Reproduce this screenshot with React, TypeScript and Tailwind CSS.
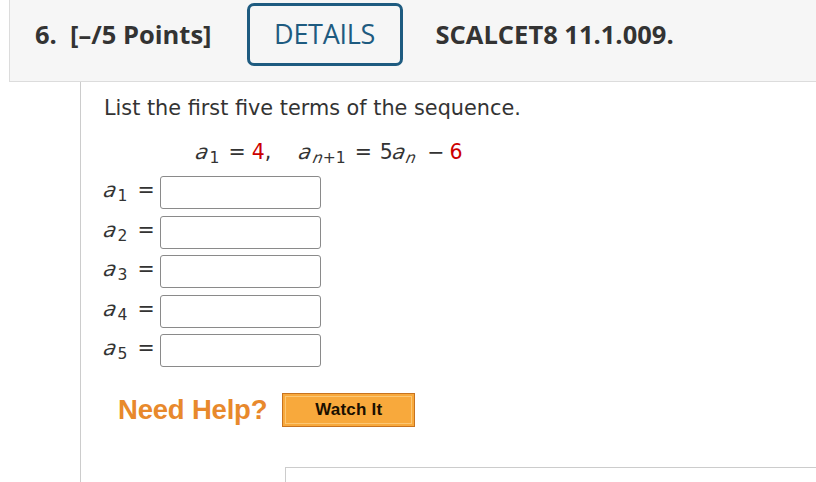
import React from "react";

const verdana = { fontFamily: '"DejaVu Sans", Verdana, sans-serif' };

function It({ children }: { children: React.ReactNode }) {
  return <span className="inline-block italic -skew-x-[12deg]">{children}</span>;
}

function Sub({ base, sub }: { base: string; sub: React.ReactNode }) {
  return (
    <span className="inline-flex items-baseline">
      <It>{base}</It>
      <span className="text-[0.76em] relative top-[0.28em] ml-[1px]">{sub}</span>
    </span>
  );
}

export default function App() {
  const rows = ["1", "2", "3", "4", "5"];
  return (
    <div className="w-[816px] h-[482px] overflow-hidden bg-white relative">
      <div className="ml-[9px] h-[82px] bg-[#f6f6f6] border-l border-b border-[#dcdcdc] flex items-start font-['Open_Sans',sans-serif] text-[#333]">
        <div className="pl-[25px] pt-[15px] text-[25.5px] font-bold whitespace-pre">6.  [–/5 Points]</div>
        <div className="ml-[35px] mt-[3px] w-[156px] h-[63px] border-[3px] border-[#1e5b80] rounded-[7px] flex items-center justify-center text-[27px] text-[#1e5b80] tracking-[-0.3px]">
          DETAILS
        </div>
        <div className="ml-[33px] pt-[15px] text-[25.5px] font-bold">SCALCET8 11.1.009.</div>
      </div>
      <div className="ml-[80px] border-l border-[#cccccc] h-[400px] text-[#333]" style={verdana}>
        <div className="pl-[23px] pt-[12px] text-[20.8px] leading-[28px]">List the first five terms of the sequence.</div>
        <div className="pl-[115px] pt-[16px] text-[20.5px] leading-[28px] flex items-baseline whitespace-pre">
          <Sub base="a" sub="1" />
          <span className="ml-[9px]">=</span>
          <span className="ml-[6px] text-[#cc0000]">4</span>
          <span>,</span>
          <span className="ml-[28px]">
            <Sub base="a" sub={<><It>n</It>+1</>} />
          </span>
          <span className="ml-[9px]">=</span>
          <span className="ml-[8px]">5</span>
          <Sub base="a" sub={<It>n</It>} />
          <span className="ml-[11px]">−</span>
          <span className="ml-[5px] text-[#cc0000]">6</span>
        </div>
        <div className="pl-[23px] pt-[8px] flex flex-col gap-[6.5px]">
          {rows.map((r) => (
            <div key={r} className="flex items-center h-[33px]">
              <div className="w-[56px] text-[20.5px] flex items-baseline -mt-[4px]">
                <Sub base="a" sub={r} />
                <span className="ml-[10px]">=</span>
              </div>
              <div className="w-[161px] h-[33px] border border-[#8a8a8a] rounded-[3px] bg-white" />
            </div>
          ))}
        </div>
        <div className="pl-[37px] pt-[22px] flex items-center">
          <div className="text-[27.5px] font-bold text-[#e8892c] font-['Liberation_Sans',Arial,sans-serif] tracking-[-0.2px]">Need Help?</div>
          <div className="ml-[15px] w-[133px] h-[34px] bg-[#f8a93c] border border-[#c8731f] p-[2px]">
            <div className="w-full h-full border border-[#fcc774] flex items-center justify-center text-[17px] font-bold text-[#1a1000] font-['Liberation_Sans',Arial,sans-serif] tracking-[0.2px]">
              Watch It
            </div>
          </div>
        </div>
        <div className="ml-[204px] mt-[37px] border-t border-l border-[#cccccc] h-[40px]" />
      </div>
    </div>
  );
}
